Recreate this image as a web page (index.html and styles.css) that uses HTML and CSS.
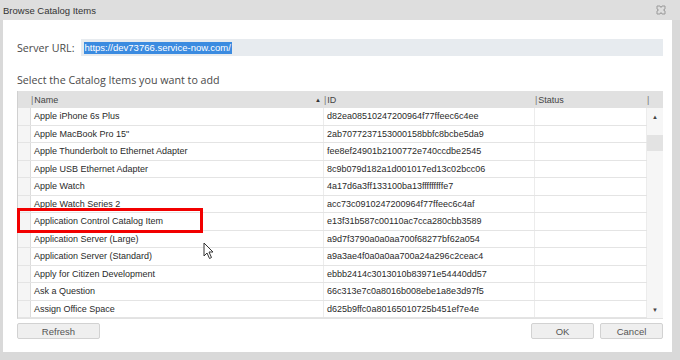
FILE: index.html
```html
<!DOCTYPE html>
<html>
<head>
    <title>Browse Catalog Items</title>
    <link rel="stylesheet" href="styles.css">
</head>
<body>
    <div class="window">
        <div class="titlebar">
            <span class="title">Browse Catalog Items</span>
            <svg class="close" width="10" height="10" viewBox="0 0 10 10">
                <path d="M1 1 L4 1 L5 2.5 L6 1 L9 1 L9 4 L7.5 5 L9 6 L9 9 L6 9 L5 7.5 L4 9 L1 9 L1 6 L2.5 5 L1 4 Z" fill="none" stroke="#9a9a9a" stroke-width="1"/>
            </svg>
        </div>
        <div class="frame">
            <div class="content">
                <div class="url-row">
                    <label class="label">Server URL:</label>
                    <div class="url-input"><span class="selected">https://dev73766.service-now.com/</span></div>
                </div>
                <div class="label select-label">Select the Catalog Items you want to add</div>

                <div class="grid">
                    <div class="grid-head">
                        <div class="hcell sel"></div>
                        <div class="hcell name"><span class="bar">|</span>Name<span class="sort">&#9650;</span></div>
                        <div class="hcell"><span class="bar">|</span>ID</div>
                        <div class="hcell"><span class="bar">|</span>Status</div>
                        <div class="hcell end"><span class="bar">|</span></div>
                    </div>
                    <div class="grid-body">
                        <div class="rows" id="rows"></div>
                        <div class="scrollbar">
                            <div class="arrow">&#9650;</div>
                            <div class="track-gap"></div>
                            <div class="thumb"></div>
                            <div class="track"></div>
                            <div class="arrow">&#9660;</div>
                        </div>
                    </div>
                    <div class="highlight"></div>
                    <svg class="cursor" width="12" height="18" viewBox="0 0 12 18">
                        <path d="M1 1 L1 14 L4 11 L6.5 16.5 L8.5 15.5 L6 10 L10 10 Z" fill="#fff" stroke="#333" stroke-width="1" stroke-linejoin="round"/>
                    </svg>
                </div>

                <div class="buttons">
                    <button class="btn">Refresh</button>
                    <div class="spacer"></div>
                    <button class="btn small">OK</button>
                    <button class="btn small">Cancel</button>
                </div>
            </div>
        </div>
    </div>

    <script>
        const items = [
            ['Apple iPhone 6s Plus', 'd82ea08510247200964f77ffeec6c4ee'],
            ['Apple MacBook Pro 15"', '2ab7077237153000158bbfc8bcbe5da9'],
            ['Apple Thunderbolt to Ethernet Adapter', 'fee8ef24901b2100772e740ccdbe2545'],
            ['Apple USB Ethernet Adapter', '8c9b079d182a1d001017ed13c02bcc06'],
            ['Apple Watch', '4a17d6a3ff133100ba13fffffffffe7'],
            ['Apple Watch Series 2', 'acc73c0910247200964f77ffeec6c4af'],
            ['Application Control Catalog Item', 'e13f31b587c00110ac7cca280cbb3589'],
            ['Application Server (Large)', 'a9d7f3790a0a0aa700f68277bf62a054'],
            ['Application Server (Standard)', 'a9a3ae4f0a0a0aa700a24a296c2ceac4'],
            ['Apply for Citizen Development', 'ebbb2414c3013010b83971e54440dd57'],
            ['Ask a Question', '66c313e7c0a8016b008ebe1a8e3d97f5'],
            ['Assign Office Space', 'd625b9ffc0a80165010725b451ef7e4e']
        ];

        const rows = document.getElementById('rows');
        items.forEach(([name, id]) => {
            const row = document.createElement('div');
            row.className = 'row';
            row.innerHTML = '<div class="cell sel"></div><div class="cell"></div><div class="cell"></div><div class="cell"></div>';
            row.children[1].textContent = name;
            row.children[2].textContent = id;
            rows.appendChild(row);
        });
    </script>
</body>
</html>
```

FILE: styles.css
```css
* {
    box-sizing: border-box;
}

body {
    margin: 0;
    width: 680px;
    height: 360px;
    overflow: hidden;
    background: #d9d9d9;
    font-family: "Liberation Sans", Arial, sans-serif;
}

.window {
    display: flex;
    flex-direction: column;
    height: 360px;
}

.titlebar {
    height: 20px;
    display: flex;
    align-items: center;
    justify-content: space-between;
    padding: 0 14px 0 3px;
    background: #dedede;
}

.title {
    font-size: 9.5px;
    color: #333;
}

.frame {
    height: 332px;
    margin: 0 8px 0 3px;
    background: #fff;
}

.content {
    display: flex;
    flex-direction: column;
    padding: 19px 9px 0 14px;
}

.label {
    font-family: "Open Sans", "Noto Sans", sans-serif;
    font-size: 10.7px;
    color: #4a4a4a;
}

.url-row {
    display: flex;
    align-items: center;
    gap: 6px;
    height: 17px;
}

.url-input {
    flex: 1;
    height: 17px;
    background: #e7ebef;
    display: flex;
    align-items: center;
    padding-left: 3px;
}

.selected {
    background: #3b8be0;
    color: #fff;
    font-size: 9.5px;
    line-height: 12px;
    padding: 0 1px;
}

.select-label {
    margin-top: 17px;
    line-height: 14px;
}

.grid {
    position: relative;
    margin-top: 4px;
    border-left: 1px solid #d0d0d0;
    border-bottom: 1px solid #e2e2e2;
    font-size: 9px;
    color: #2a2a2a;
}

.grid-head {
    display: grid;
    grid-template-columns: 13px 293px 211px 112px 1fr;
    height: 17px;
    background: #e1e1e1;
    color: #444;
}

.hcell {
    display: flex;
    align-items: center;
    position: relative;
}

.bar {
    color: #777;
    margin-right: 1px;
}

.sort {
    position: absolute;
    right: 3px;
    font-size: 6px;
    color: #333;
}

.grid-body {
    display: flex;
}

.rows {
    width: 630px;
}

.row {
    display: grid;
    grid-template-columns: 13px 293px 211px 1fr;
    height: 17.5px;
    border-bottom: 1px solid #e4e4e4;
}

.cell {
    display: flex;
    align-items: center;
    padding-left: 3px;
    border-right: 1px solid #ececec;
}

.cell.sel {
    background: #f5f5f5;
    border-right: 1px solid #dcdcdc;
}

.scrollbar {
    width: 16px;
    display: flex;
    flex-direction: column;
    background: #f6f6f6;
}

.arrow {
    height: 17px;
    display: flex;
    align-items: center;
    justify-content: center;
    font-size: 6px;
    color: #444;
}

.track-gap {
    height: 10px;
}

.thumb {
    height: 16px;
    background: #e3e3e3;
}

.track {
    flex: 1;
}

.highlight {
    position: absolute;
    left: -1px;
    top: 117px;
    width: 186px;
    height: 25px;
    border: 3px solid #f20000;
}

.cursor {
    position: absolute;
    left: 185px;
    top: 151px;
}

.buttons {
    display: flex;
    gap: 6px;
    margin-top: 4px;
}

.spacer {
    flex: 1;
}

.btn {
    width: 83px;
    height: 16px;
    padding: 0;
    background: #efefef;
    border: 1px solid #d2d2d2;
    border-radius: 2px;
    font-family: "Liberation Sans", Arial, sans-serif;
    font-size: 9.5px;
    color: #555;
}

.btn.small {
    width: 63px;
}
```
